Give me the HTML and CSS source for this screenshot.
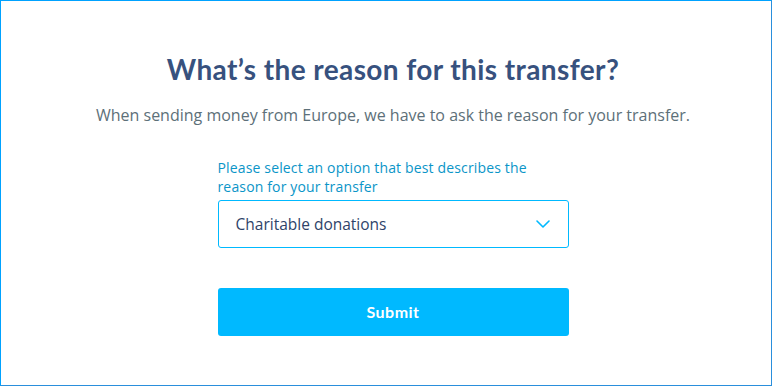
FILE: index.html
```html
<!DOCTYPE html>
<html lang="en">
<head>
<meta charset="utf-8">
<title>Reason for transfer</title>
<link rel="stylesheet" href="styles.css">
</head>
<body>
<main class="frame">
  <h1 class="title">What’s the reason for this transfer?</h1>
  <p class="subtitle">When sending money from Europe, we have to ask the reason for your transfer.</p>
  <form class="form">
    <label class="label" for="reason">Please select an option that best describes the reason for your transfer</label>
    <div class="select" id="reason">
      <span class="select-value">Charitable donations</span>
      <svg class="chevron" width="14" height="8" viewBox="0 0 14 8" aria-hidden="true">
        <path d="M1 1 L7 7 L13 1" fill="none" stroke="#00b9ff" stroke-width="1.6" stroke-linecap="round" stroke-linejoin="round"/>
      </svg>
    </div>
    <button type="button" class="submit">Submit</button>
  </form>
</main>
</body>
</html>
```
FILE: styles.css
```css
* { box-sizing: border-box; }
html, body { margin: 0; padding: 0; background: #fff; }
body { font-family: "Open Sans", "Liberation Sans", sans-serif; }
.frame {
  width: 772px;
  height: 386px;
  border-top: 1px solid #00a2ff;
  border-left: 1px solid #00a2ff;
  border-right: 1px solid #2a8fdc;
  border-bottom: 1px solid #2a8fdc;
  display: flex;
  flex-direction: column;
  align-items: center;
  padding: 50px 0 0 14px;
}
.title {
  margin: 0;
  font-family: "Lato", "Open Sans", sans-serif;
  font-weight: 700;
  font-size: 28px;
  letter-spacing: 0.4px;
  line-height: 36px;
  color: #37517e;
}
.subtitle {
  margin: 17px 0 0;
  font-size: 16px;
  line-height: 22px;
  color: #5d7079;
}
.form {
  width: 351px;
  margin-top: 32px;
  display: flex;
  flex-direction: column;
}
.label {
  font-size: 14px;
  letter-spacing: 0.15px;
  line-height: 19px;
  color: #0a95c8;
  padding-right: 10px;
}
.select {
  margin-top: 4px;
  height: 48px;
  border: 1px solid #00b9ff;
  border-radius: 3px;
  display: flex;
  align-items: center;
  justify-content: space-between;
  padding: 0 18px 0 17px;
}
.select-value {
  font-size: 15.5px;
  color: #2e4369;
}
.chevron { display: block; }
.submit {
  margin-top: 40px;
  height: 48px;
  width: 351px;
  border: 0;
  border-radius: 3px;
  background: #00b9ff;
  color: #fff;
  font-family: "Lato", "Open Sans", sans-serif;
  font-weight: 700;
  font-size: 16px;
  letter-spacing: 0.5px;
  padding-bottom: 2px;
}
```
